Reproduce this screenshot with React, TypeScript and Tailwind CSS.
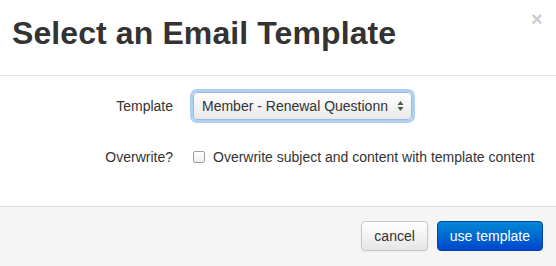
import React from 'react';

function SelectArrows() {
  return (
    <svg width="7" height="12" viewBox="0 0 7 12" className="shrink-0">
      <path d="M3.5 1 L6.5 5 H0.5 Z" fill="#555" />
      <path d="M3.5 11 L6.5 7 H0.5 Z" fill="#555" />
    </svg>
  );
}

export default function App() {
  return (
    <div
      className="relative w-[556px] h-[266px] bg-white flex flex-col text-[#333] overflow-hidden"
      style={{ fontFamily: '"Liberation Sans", Arial, Helvetica, sans-serif' }}
    >
      {/* Close */}
      <span className="absolute left-[531px] top-[9px] text-[20px] leading-[20px] font-bold text-black opacity-20">
        ×
      </span>

      {/* Header */}
      <div className="h-[76px] shrink-0 border-b border-[#e5e5e5] pl-[12px] pt-[15px]">
        <h3 className="text-[32px] leading-[36px] font-bold tracking-[0.1px] text-[#333]">Select an Email Template</h3>
      </div>

      {/* Body */}
      <div className="flex-1 pt-[16px] text-[14px]">
        <div className="flex items-center h-[28px]">
          <label className="w-[173px] text-right">Template</label>
          <div className="ml-[20px] w-[219px] h-[28px] rounded-[4px] border border-[#a7b7cc] bg-gradient-to-b from-white to-[#e9e9e9] shadow-[0_0_0_3px_#acd1f4] flex items-center pl-[8px] pr-[7px]">
            <span className="flex-1 whitespace-nowrap overflow-hidden text-[14px] text-[#333]">Member - Renewal Questionn</span>
            <SelectArrows />
          </div>
        </div>

        <div className="flex items-center h-[20px] mt-[27px]">
          <label className="w-[173px] text-right">Overwrite?</label>
          <div className="ml-[20px] flex items-center">
            <span className="w-[12px] h-[12px] rounded-[2px] border border-[#a0a0a0] bg-gradient-to-b from-white to-[#f1f1f1] shrink-0" />
            <span className="ml-[8px] whitespace-nowrap">Overwrite subject and content with template content</span>
          </div>
        </div>
      </div>

      {/* Footer */}
      <div className="h-[60px] shrink-0 border-t border-[#dddddd] bg-[#f5f5f5] flex justify-end items-start pt-[14px] pr-[13px] gap-[9px]">
        <button className="h-[30px] px-3 rounded-[4px] border border-[#c8c8c8] bg-gradient-to-b from-white to-[#e6e6e6] text-[14px] text-[#333] shadow-[0_1px_2px_rgba(0,0,0,0.05)]">
          cancel
        </button>
        <button className="h-[30px] px-3 rounded-[4px] border border-[#0044aa] bg-gradient-to-b from-[#0a88d4] to-[#0044cc] text-[14px] text-white">
          use template
        </button>
      </div>
    </div>
  );
}
